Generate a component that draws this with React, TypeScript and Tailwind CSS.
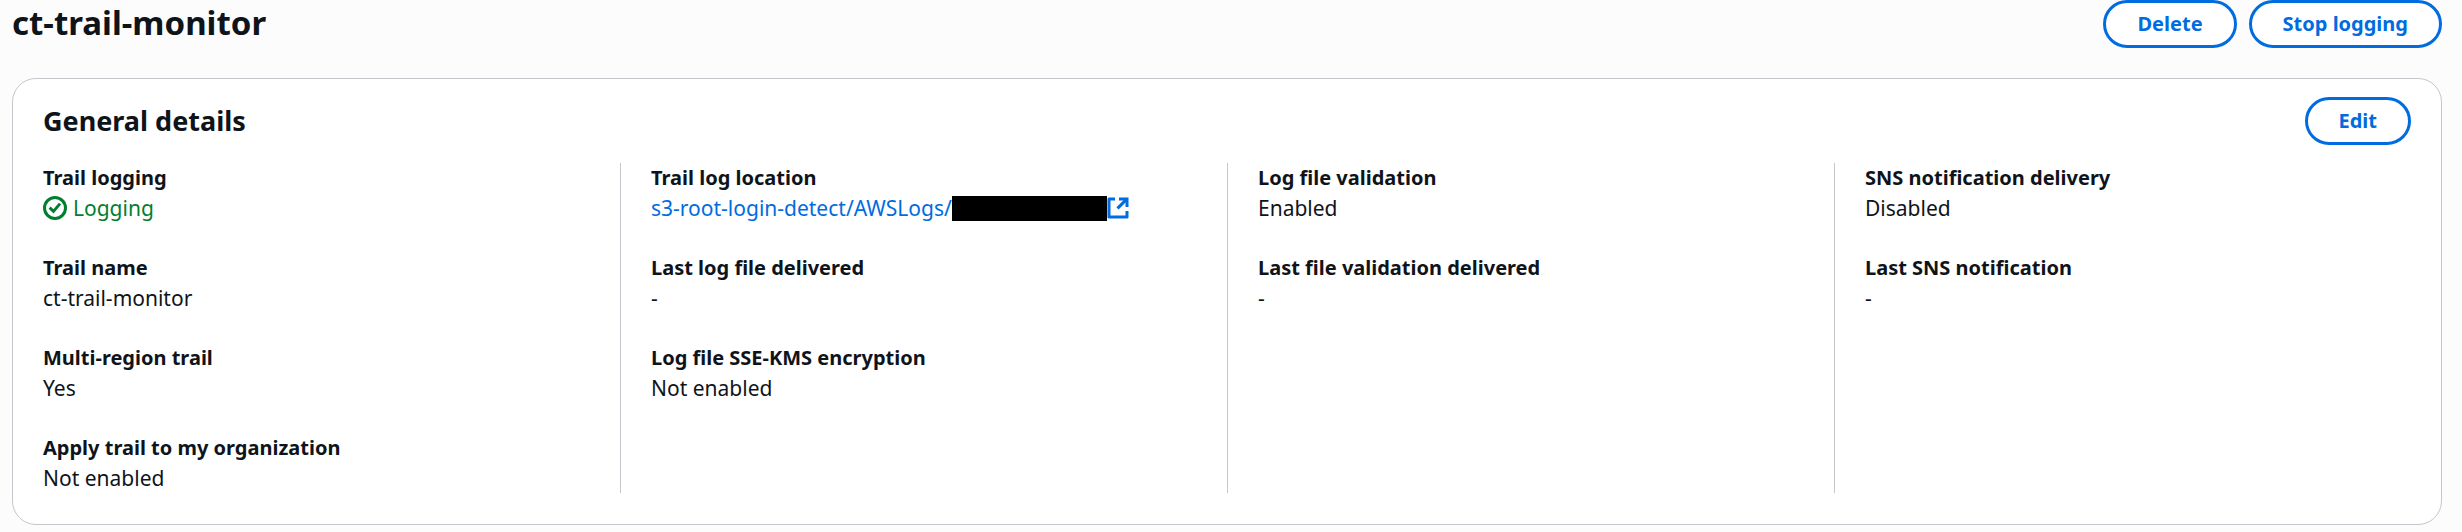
import type { ReactNode } from "react";

function StatusCheckIcon() {
  return (
    <svg aria-hidden="true" viewBox="0 0 24 24" className="h-6 w-6 shrink-0" fill="none" stroke="currentColor" strokeWidth="3">
      <circle cx="12" cy="12" r="10.5" />
      <path d="M6.6 11.6l3.9 3.8L17 7.6" />
    </svg>
  );
}

function ExternalLinkIcon() {
  return (
    <svg aria-hidden="true" viewBox="0 0 22 22" className="h-[22px] w-[22px] shrink-0" fill="none" stroke="currentColor" strokeWidth="3">
      <path d="M8 1.9H2v18.2h18V14" strokeLinejoin="round" />
      <path d="M12 1.9h8v8" />
      <path d="M20 1.9L10.5 11.4" />
    </svg>
  );
}

function ActionButton({ children }: { children: ReactNode }) {
  return (
    <button
      type="button"
      className="h-12 rounded-full border-3 border-[#006ce0] bg-white px-[31px] text-xl leading-[30px] font-bold whitespace-nowrap text-[#006ce0] hover:bg-[#f0fbff]"
    >
      {children}
    </button>
  );
}

type Detail = { label: string; value: ReactNode };

const columns: Detail[][] = [
  [
    {
      label: "Trail logging",
      value: (
        <span className="flex items-center gap-1.5 text-[#00802f]">
          <StatusCheckIcon />
          Logging
        </span>
      ),
    },
    { label: "Trail name", value: "ct-trail-monitor" },
    { label: "Multi-region trail", value: "Yes" },
    { label: "Apply trail to my organization", value: "Not enabled" },
  ],
  [
    {
      label: "Trail log location",
      value: (
        <a href="#trail-log-location" className="flex items-center whitespace-nowrap text-[#006ce0]">
          s3-root-login-detect/AWSLogs/
          <span className="h-[25px] w-[155px] bg-black" />
          <ExternalLinkIcon />
        </a>
      ),
    },
    { label: "Last log file delivered", value: "-" },
    { label: "Log file SSE-KMS encryption", value: "Not enabled" },
  ],
  [
    { label: "Log file validation", value: "Enabled" },
    { label: "Last file validation delivered", value: "-" },
  ],
  [
    { label: "SNS notification delivery", value: "Disabled" },
    { label: "Last SNS notification", value: "-" },
  ],
];

export default function App() {
  return (
    <main className="min-h-screen bg-[#fcfcfd] pr-5 pl-3 font-['Noto_Sans',sans-serif] text-[#0f141a]">
      <header className="flex items-start justify-between">
        <h1 className="text-[33px] leading-[45px] font-bold">ct-trail-monitor</h1>
        <div className="flex gap-3">
          <ActionButton>Delete</ActionButton>
          <ActionButton>Stop logging</ActionButton>
        </div>
      </header>

      <section className="mt-[30px] rounded-3xl border border-[#c6c6cd] bg-white px-[30px] pt-[18px] pb-[31px]">
        <div className="flex items-center justify-between">
          <h2 className="text-[27px] leading-9 font-bold">General details</h2>
          <ActionButton>Edit</ActionButton>
        </div>
        <div className="-mx-[30px] mt-[18px] grid grid-cols-4">
          {columns.map((items, index) => (
            <dl
              key={index}
              className="flex flex-col gap-[30px] border-l border-[#c6c6cd] px-[30px] first:border-l-0"
            >
              {items.map((item) => (
                <div key={item.label}>
                  <dt className="text-xl leading-[30px] font-bold">{item.label}</dt>
                  <dd className="text-[21px] leading-[30px]">{item.value}</dd>
                </div>
              ))}
            </dl>
          ))}
        </div>
      </section>
    </main>
  );
}
